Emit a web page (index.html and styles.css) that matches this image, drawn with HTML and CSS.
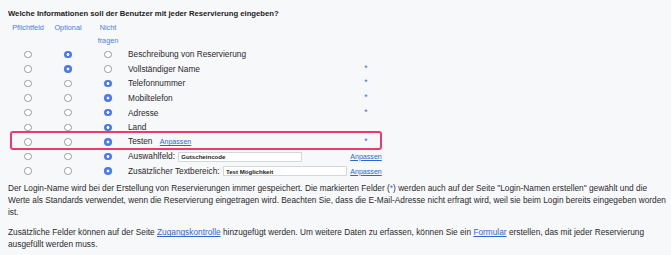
FILE: index.html
```html
<!DOCTYPE html>
<html lang="de">
<head>
<meta charset="utf-8">
<title>Felder</title>
<link rel="stylesheet" href="styles.css">
</head>
<body>
<p class="title">Welche Informationen soll der Benutzer mit jeder Reservierung eingeben?</p>
<div class="fields">
  <table class="field-table">
    <thead>
      <tr>
        <th class="col-opt">Pflichtfeld</th>
        <th class="col-opt">Optional</th>
        <th class="col-opt">Nicht<br>fragen</th>
        <th class="col-label"></th>
        <th class="col-extra"></th>
      </tr>
    </thead>
    <tbody>
      <tr>
        <td class="cell-opt"><input type="radio" name="f1"></td>
        <td class="cell-opt"><input type="radio" name="f1" checked></td>
        <td class="cell-opt"><input type="radio" name="f1"></td>
        <td class="cell-label">Beschreibung von Reservierung</td>
        <td class="cell-extra"></td>
      </tr>
      <tr>
        <td class="cell-opt"><input type="radio" name="f2"></td>
        <td class="cell-opt"><input type="radio" name="f2" checked></td>
        <td class="cell-opt"><input type="radio" name="f2"></td>
        <td class="cell-label">Vollständiger Name</td>
        <td class="cell-extra"><span class="star">*</span></td>
      </tr>
      <tr>
        <td class="cell-opt"><input type="radio" name="f3"></td>
        <td class="cell-opt"><input type="radio" name="f3"></td>
        <td class="cell-opt"><input type="radio" name="f3" checked></td>
        <td class="cell-label">Telefonnummer</td>
        <td class="cell-extra"><span class="star">*</span></td>
      </tr>
      <tr>
        <td class="cell-opt"><input type="radio" name="f4"></td>
        <td class="cell-opt"><input type="radio" name="f4"></td>
        <td class="cell-opt"><input type="radio" name="f4" checked></td>
        <td class="cell-label">Mobiltelefon</td>
        <td class="cell-extra"><span class="star">*</span></td>
      </tr>
      <tr>
        <td class="cell-opt"><input type="radio" name="f5"></td>
        <td class="cell-opt"><input type="radio" name="f5"></td>
        <td class="cell-opt"><input type="radio" name="f5" checked></td>
        <td class="cell-label">Adresse</td>
        <td class="cell-extra"><span class="star">*</span></td>
      </tr>
      <tr>
        <td class="cell-opt"><input type="radio" name="f6"></td>
        <td class="cell-opt"><input type="radio" name="f6"></td>
        <td class="cell-opt"><input type="radio" name="f6" checked></td>
        <td class="cell-label">Land</td>
        <td class="cell-extra"></td>
      </tr>
      <tr>
        <td class="cell-opt"><input type="radio" name="f7"></td>
        <td class="cell-opt"><input type="radio" name="f7"></td>
        <td class="cell-opt"><input type="radio" name="f7" checked></td>
        <td class="cell-label">Testen <a href="#" class="link table-link inline-link">Anpassen</a></td>
        <td class="cell-extra"><span class="star">*</span></td>
      </tr>
      <tr>
        <td class="cell-opt"><input type="radio" name="f8"></td>
        <td class="cell-opt"><input type="radio" name="f8"></td>
        <td class="cell-opt"><input type="radio" name="f8" checked></td>
        <td class="cell-label">Auswahlfeld: <input type="text" class="text-field" value="Gutscheincode"></td>
        <td class="cell-extra"><a href="#" class="link table-link">Anpassen</a></td>
      </tr>
      <tr>
        <td class="cell-opt"><input type="radio" name="f9"></td>
        <td class="cell-opt"><input type="radio" name="f9"></td>
        <td class="cell-opt"><input type="radio" name="f9" checked></td>
        <td class="cell-label">Zusätzlicher Textbereich: <input type="text" class="text-field" value="Test Möglichkeit"></td>
        <td class="cell-extra"><a href="#" class="link table-link">Anpassen</a></td>
      </tr>
    </tbody>
  </table>
  <div class="highlight"></div>
</div>
<p class="note">Der Login-Name wird bei der Erstellung von Reservierungen immer gespeichert. Die markierten Felder (<span class="star-inline">*</span>) werden auch auf der Seite "Login-Namen erstellen" gewählt und die<br>Werte als Standards verwendet, wenn die Reservierung eingetragen wird. Beachten Sie, dass die E-Mail-Adresse nicht erfragt wird, weil sie beim Login bereits eingegeben worden ist.</p>
<p class="note note-second">Zusätzliche Felder können auf der Seite <a href="#" class="link">Zugangskontrolle</a> hinzugefügt werden. Um weitere Daten zu erfassen, können Sie ein <a href="#" class="link">Formular</a> erstellen, das mit jeder Reservierung ausgefüllt werden muss.</p>
</body>
</html>
```

FILE: styles.css
```css
html, body {
  background: #f7f8fa;
}
body {
  margin: 8px 3px 8px 8px;
  font-family: "Liberation Sans", Arial, sans-serif;
  font-size: 8.3px;
  color: #2a2a2a;
}
.title {
  margin: 0;
  font-weight: bold;
  font-size: 7.7px;
  line-height: 11px;
  color: #222;
}
.fields {
  position: relative;
  margin-top: 2px;
}
.field-table {
  border-collapse: collapse;
  border-spacing: 0;
}
.field-table th {
  padding: 0;
  font-weight: normal;
  font-size: 7.3px;
  line-height: 13px;
  color: #4a7fd4;
  vertical-align: top;
  height: 25px;
}
.col-opt {
  width: 40px;
  text-align: center;
}
.col-label {
  width: 219px;
}
.col-extra {
  width: 38px;
}
.field-table td {
  padding: 0;
  height: 14.6px;
  vertical-align: middle;
}
.cell-opt {
  text-align: center;
  line-height: 0;
}
.cell-label {
  white-space: nowrap;
  line-height: 10px;
}
.cell-extra {
  text-align: center;
  line-height: 10px;
}
input[type="radio"] {
  -webkit-appearance: none;
  appearance: none;
  margin: 0;
  width: 7.5px;
  height: 7.5px;
  border: 0.8px solid #9a9a9a;
  border-radius: 50%;
  background: #fff;
  vertical-align: middle;
  box-sizing: border-box;
}
input[type="radio"]:checked {
  border: none;
  background: radial-gradient(circle, #ffffff 0 1.2px, #4a78ee 1.7px);
}
.star {
  color: #3f6fd6;
  font-size: 8.5px;
  position: relative;
  top: -1px;
}
.star-inline {
  color: #3f6fd6;
}
.link {
  color: #2f66cc;
  text-decoration: underline;
}
.table-link {
  font-size: 7.1px;
}
.inline-link {
  margin-left: 5px;
}
.text-field {
  box-sizing: border-box;
  width: 124px;
  height: 10px;
  margin: 0 0 0 1px;
  padding: 0 2px;
  border: 1px solid #d6d6d6;
  border-radius: 0;
  background: #fff;
  font-family: "Liberation Sans", Arial, sans-serif;
  font-size: 6.1px;
  font-weight: bold;
  color: #222;
  vertical-align: middle;
  outline: none;
}
.highlight {
  position: absolute;
  left: 2px;
  top: 110px;
  width: 372px;
  height: 19px;
  box-sizing: border-box;
  border: 2px solid #f2386b;
  border-radius: 3px;
  pointer-events: none;
}
.note {
  margin: 4px 0 0;
  line-height: 12px;
}
.note-second {
  margin-top: 8px;
}
```
